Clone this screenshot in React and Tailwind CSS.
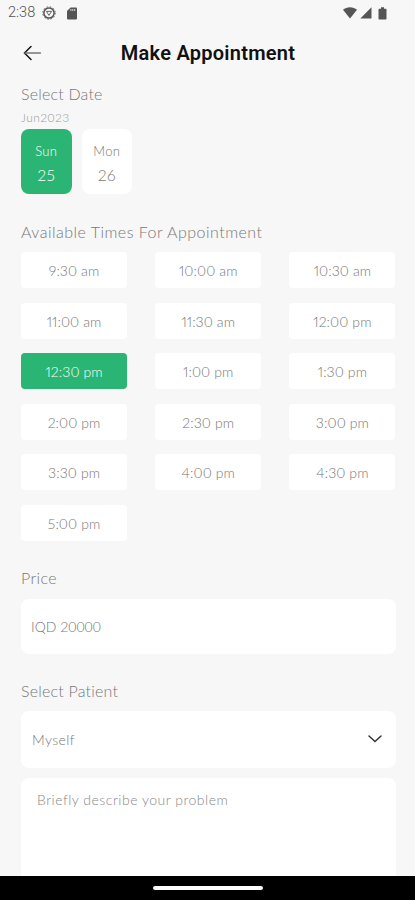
import { useState } from "react";

const days = [
  { day: "Sun", date: "25" },
  { day: "Mon", date: "26" },
];

const times = [
  "9:30 am",
  "10:00 am",
  "10:30 am",
  "11:00 am",
  "11:30 am",
  "12:00 pm",
  "12:30 pm",
  "1:00 pm",
  "1:30 pm",
  "2:00 pm",
  "2:30 pm",
  "3:00 pm",
  "3:30 pm",
  "4:00 pm",
  "4:30 pm",
  "5:00 pm",
];

const StatusBar = () => {
  return (
    <div className="flex h-[26px] shrink-0 items-center pl-[8px] pr-[28px] font-['Roboto',sans-serif] text-[#555]">
      <span className="text-[14.5px] font-light leading-none">2:38</span>
      <svg className="ml-[7px] h-[14px] w-[14px]" viewBox="0 0 14 14" fill="none" stroke="currentColor">
        <circle cx="7" cy="7" r="5.1" strokeWidth="1.5" />
        <circle cx="7" cy="7" r="6.2" strokeWidth="1" strokeDasharray="1.5 1.75" />
        <path d="M4.4 5.4h5.2L7 9.4z" strokeWidth="0.9" />
      </svg>
      <svg className="ml-[11px] h-[13px] w-[10px]" viewBox="0 0 10 13" fill="currentColor">
        <path d="M3.6 0.5H9a1 1 0 0 1 1 1v10a1 1 0 0 1-1 1H1a1 1 0 0 1-1-1V4z" />
        <path d="M3.9 2v2M5.8 2v2M7.7 2v2" stroke="#f7f7f7" strokeWidth="0.8" />
      </svg>
      <svg className="ml-auto h-[12px] w-[14px]" viewBox="0 0 14 12" fill="currentColor">
        <path d="M0 2.7C1.9 1.1 4.3 0.2 7 0.2s5.1 0.9 7 2.5L7 11.6z" />
      </svg>
      <svg className="ml-[3px] h-[12px] w-[12px]" viewBox="0 0 12 12" fill="currentColor">
        <path d="M11.5 0.3v11.3H0.3z" />
      </svg>
      <svg className="ml-[6px] h-[13px] w-[9px]" viewBox="0 0 9 13" fill="currentColor">
        <path d="M3 0.3h3v1.4h1.8q.7 0 .7.7v9.3q0 .7-.7.7H1.200q-.7 0-.7-.7V2.4q0-.7.7-.7H3z" />
      </svg>
    </div>
  );
};

const App = () => {
  const [selectedDay, setSelectedDay] = useState("25");
  const [selectedTime, setSelectedTime] = useState("12:30 pm");

  return (
    <div className="flex h-[900px] w-[415px] flex-col overflow-hidden bg-[#f7f7f7] font-['Lato',sans-serif] font-light text-[#777]">
      <StatusBar />
      <header className="flex h-[54px] shrink-0 items-center px-[23px]">
        <button className="w-[19px]">
          <svg className="h-[16px] w-[19px]" viewBox="0 0 19 16" fill="none" stroke="#111" strokeLinecap="round">
            <path d="M8 1.5 1.5 8 8 14.5" strokeWidth="1.5" />
            <path d="M2 8h15.5" stroke="#777" strokeWidth="1.3" />
          </svg>
        </button>
        <h1 className="flex-1 pr-[18px] text-center font-['Roboto',sans-serif] text-[20px] font-semibold tracking-[0.25px] text-[#111]">
          Make Appointment
        </h1>
      </header>

      <main className="flex min-h-0 flex-1 flex-col pl-[21px] pr-[19.5px]">
        <h2 className="mt-[3px] h-[22px] text-[16px] leading-[22px] tracking-[0.2px]">
          Select Date
        </h2>
        <p className="mt-[5px] h-[16px] text-[12px] leading-[16px] tracking-[0.4px] text-[#999]">
          Jun2023
        </p>
        <div className="mt-[3px] flex gap-[10px]">
          {days.map(({ day, date }) => (
            <button
              key={date}
              onClick={() => setSelectedDay(date)}
              className={`flex h-[65px] w-[50.5px] flex-col items-center rounded-[8px] pt-[12px] ${
                selectedDay === date ? "bg-[#2ab574] text-white" : "bg-white"
              }`}
            >
              <span className="text-[13px] leading-[20px] tracking-[0.3px]">{day}</span>
              <span className="mt-[3px] text-[15.5px] leading-[22px]">{date}</span>
            </button>
          ))}
        </div>

        <h2 className="mt-[27px] h-[22px] text-[16px] leading-[22px] tracking-[0.48px]">
          Available Times For Appointment
        </h2>
        <div className="mt-[9px] grid grid-cols-3 gap-x-[28px] gap-y-[14.5px]">
          {times.map((time) => (
            <button
              key={time}
              onClick={() => setSelectedTime(time)}
              className={`h-[36px] rounded-[4px] pt-px text-[14px] proportional-nums tracking-[0.1px] ${
                selectedTime === time ? "bg-[#2ab574] text-white" : "bg-white"
              }`}
            >
              {time}
            </button>
          ))}
        </div>

        <h2 className="mt-[26px] h-[22px] text-[16px] leading-[22px] tracking-[0.4px]">Price</h2>
        <div className="mt-[10px] flex h-[55px] shrink-0 items-center rounded-[8px] bg-white px-[10px] text-[14px]">
          IQD 20000
        </div>

        <h2 className="mt-[26px] h-[22px] text-[16px] leading-[22px] tracking-[0.2px]">
          Select Patient
        </h2>
        <div className="mt-[9px] flex h-[57px] shrink-0 items-center justify-between rounded-[8px] bg-white pl-[11px] pr-[14px] text-[14px]">
          <span className="tracking-[0.4px]">Myself</span>
          <svg className="h-[8px] w-[14px]" viewBox="0 0 14 8" fill="none" stroke="#333" strokeLinecap="round">
            <path d="M1 1l6 5.5L13 1" strokeWidth="1.5" />
          </svg>
        </div>
        <div className="mt-[10px] flex-1 rounded-t-[8px] bg-white px-[16px] pt-[12px] text-[14px] leading-[20px] tracking-[0.5px] text-[#888]">
          Briefly describe your problem
        </div>
      </main>

      <footer className="flex h-[24px] shrink-0 items-center justify-center bg-black">
        <div className="h-[4px] w-[110px] rounded-full bg-white" />
      </footer>
    </div>
  );
};

export default App;
